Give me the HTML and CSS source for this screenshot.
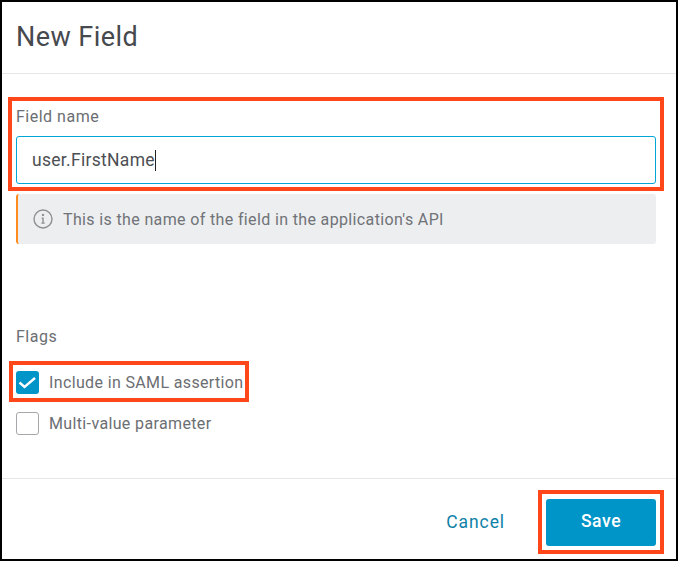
FILE: index.html
```html
<!DOCTYPE html>
<html lang="en">
<head>
    <meta charset="UTF-8">
    <meta name="viewport" content="width=device-width, initial-scale=1.0">
    <title>New Field</title>
    <link rel="stylesheet" href="styles.css">
</head>
<body>

    <div class="dialog">
        <div class="dialog-header">New Field</div>

        <div class="dialog-body">
            <div class="field">
                <div class="field-label">Field name</div>
                <div class="field-input">user.FirstName<span class="caret"></span></div>
                <div class="mark mark-field"></div>
            </div>

            <div class="hint">
                <svg class="hint-icon" width="20" height="20" viewBox="0 0 20 20">
                    <circle cx="10" cy="10" r="9" fill="none" stroke="#8d9094" stroke-width="1.4"/>
                    <circle cx="10" cy="5.9" r="1.2" fill="#8d9094"/>
                    <path d="M8.6 8.6H10.7V13.6H11.7V14.8H8.4V13.6H9.3V9.8H8.6Z" fill="#8d9094"/>
                </svg>
                <span>This is the name of the field in the application's API</span>
            </div>

            <div class="flags">
                <div class="field-label">Flags</div>
                <div class="check-row">
                    <span class="check checked">
                        <svg width="23" height="23" viewBox="0 0 23 23">
                            <path d="M3.5 11.5L8.5 16L19 7" fill="none" stroke="#fff" stroke-width="2.4"/>
                        </svg>
                    </span>
                    <span>Include in SAML assertion</span>
                    <div class="mark mark-check"></div>
                </div>
                <div class="check-row">
                    <span class="check"></span>
                    <span>Multi-value parameter</span>
                </div>
            </div>
        </div>

        <div class="dialog-footer">
            <button class="button-link">Cancel</button>
            <div class="save-wrap">
                <button class="button-save">Save</button>
                <div class="mark mark-save"></div>
            </div>
        </div>
    </div>

</body>
</html>
```

FILE: styles.css
```css
/* Global Styles */
* {
    margin: 0;
    padding: 0;
    box-sizing: border-box;
}

body {
    background-color: #fff;
    font-family: Roboto, Arial, sans-serif;
    color: #5f6368;
}

.dialog {
    display: flex;
    flex-direction: column;
    width: 678px;
    height: 561px;
    border: 2px solid #000;
}

.dialog-header {
    height: 72px;
    padding: 17px 15px 0 14px;
    font-size: 27px;
    line-height: 36px;
    letter-spacing: 0.45px;
    color: #46494d;
    border-bottom: 1px solid #e6e7e8;
}

.dialog-body {
    flex: 1;
    padding: 33px 20px 0 14px;
}

.field {
    position: relative;
}

.field-label {
    font-size: 16px;
    line-height: 20px;
    letter-spacing: 0.5px;
    color: #6b6e72;
}

.field-input {
    display: flex;
    align-items: center;
    height: 48px;
    margin-top: 9px;
    padding-left: 15px;
    font-size: 17.5px;
    letter-spacing: 0.3px;
    color: #4c4f53;
    border: 1px solid #00a7d4;
    border-radius: 3px;
}

.caret {
    width: 1px;
    height: 21px;
    background-color: #222;
}

/* Orange annotation boxes */
.mark {
    position: absolute;
    border: 4px solid #ff4719;
    pointer-events: none;
}

.mark-field {
    left: -8px;
    right: -8px;
    top: -10px;
    bottom: -7px;
}

.mark-check {
    left: -7px;
    top: -10px;
    width: 240px;
    height: 41px;
}

.mark-save {
    left: -8px;
    right: -8px;
    top: -9px;
    bottom: -8px;
}

.hint {
    display: flex;
    align-items: center;
    gap: 10px;
    height: 50px;
    margin-top: 10px;
    padding-left: 15px;
    font-size: 16px;
    letter-spacing: 0.36px;
    color: #707377;
    background-color: #edeef0;
    border-left: 2px solid #ff8a1e;
    border-radius: 3px;
}

.hint-icon {
    flex-shrink: 0;
}

.flags {
    margin-top: 83px;
}

.check-row {
    position: relative;
    display: flex;
    align-items: center;
    gap: 10px;
    height: 23px;
    margin-top: 18px;
    font-size: 16px;
    letter-spacing: 0.36px;
    color: #6b6e72;
}

.flags .field-label + .check-row {
    margin-top: 24px;
}

.check {
    width: 23px;
    height: 23px;
    background-color: #fff;
    border: 1px solid #a5a7aa;
    border-radius: 3px;
}

.check.checked {
    background-color: #0095c8;
    border: none;
}

.check svg {
    display: block;
}

.dialog-footer {
    display: flex;
    justify-content: flex-end;
    align-items: flex-start;
    height: 81px;
    padding: 20px 20px 0 0;
    border-top: 1px solid #e6e7e8;
}

.button-link {
    margin: 13px 41px 0 0;
    font-family: inherit;
    font-size: 17.5px;
    letter-spacing: 0.9px;
    color: #0f81a8;
    background: none;
    border: none;
}

.save-wrap {
    position: relative;
}

.button-save {
    display: block;
    width: 110px;
    height: 47px;
    padding-bottom: 4px;
    font-family: inherit;
    font-size: 17.5px;
    font-weight: 500;
    letter-spacing: 0.6px;
    color: #fff;
    background-color: #0095c8;
    border: none;
    border-radius: 3px;
}
```
